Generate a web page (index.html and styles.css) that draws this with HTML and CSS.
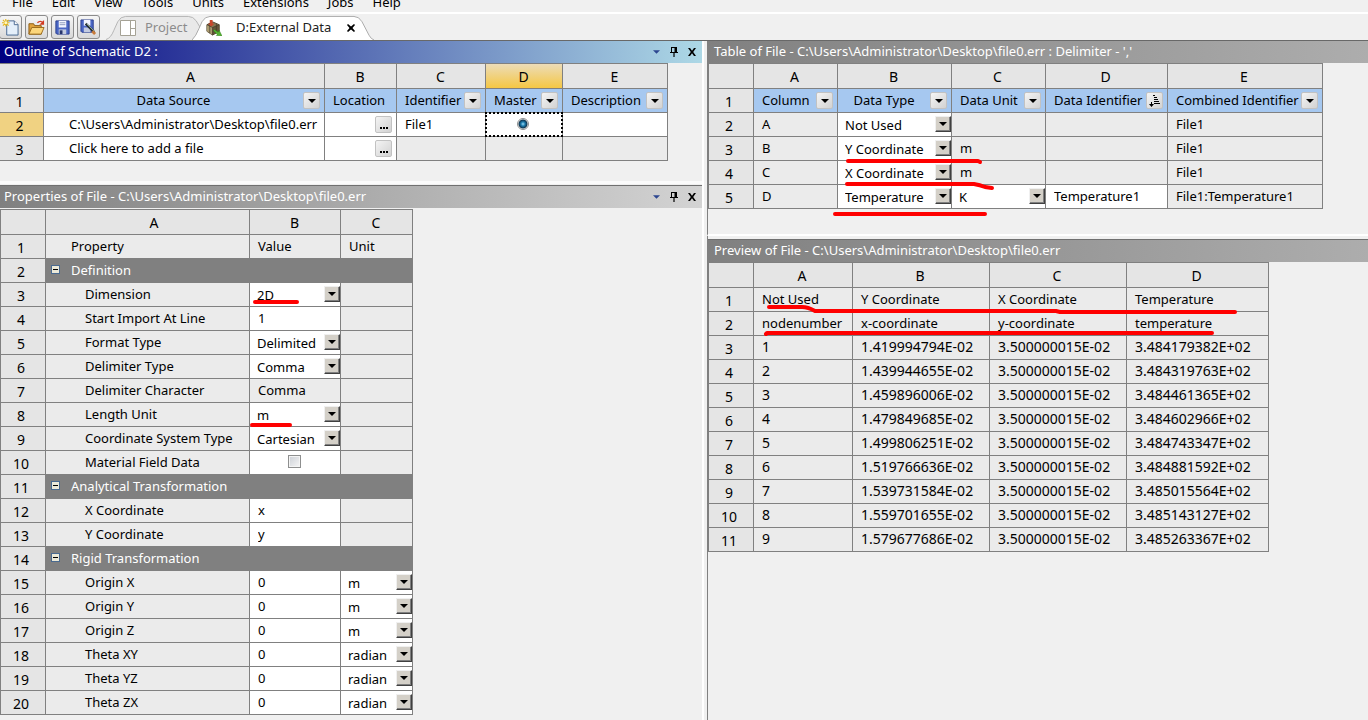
FILE: index.html
```html
<!DOCTYPE html>
<html lang="en">
<head>
<meta charset="utf-8">
<title>External Data</title>
<link rel="stylesheet" href="styles.css">
</head>
<body>
<svg class="defs" aria-hidden="true">
  <symbol id="down" viewBox="0 0 8 4"><path d="M0 0h8L4 4z"/></symbol>
  <symbol id="pin" viewBox="0 0 8 10"><path d="M1 0h6v5h1v1H4.600V10H3.400V6H0V5h1zM2 1v4h2.500V1z" fill-rule="evenodd"/></symbol>
  <symbol id="close" viewBox="0 0 8 8"><path d="M0 0h2l2 2.700L6 0h2L5.200 4 8 8H6L4 5.300 2 8H0l2.800-4z"/></symbol>
  <symbol id="sort" viewBox="0 0 12 12"><path d="M4 0h2v1H4zM5 2h3v1H5zM5 4h4v1H5zM5 6h5v1H5zM5 8h6v1H5zM2 7h1v2h2L2.500 12 0 9h2z"/></symbol>
</svg>

<nav class="menu">
  <button>File</button><button>Edit</button><button>View</button><button>Tools</button><button>Units</button><button>Extensions</button><button>Jobs</button><button>Help</button>
</nav>

<header class="toolbar">
  <div class="tools">
    <button class="tool" aria-label="New"><svg viewBox="0 0 18 18"><path d="M5 2h8l4 4v11H5z" fill="#e4effa" stroke="#45658f"/><path d="M13 2v4h4" fill="#fff" stroke="#45658f"/><path d="M4 0v8M0 4h8M1 1l6 6M7 1L1 7" stroke="#e8b818" stroke-width="1.200"/><circle cx="4" cy="4" r="1.500" fill="#fff8c0"/></svg></button>
    <button class="tool" aria-label="Open"><svg viewBox="0 0 18 18"><path d="M1 16V5h5l1 2h7v9z" fill="#e0a23c" stroke="#8a5a14"/><path d="M1 16l3-7h13l-3 7z" fill="#fbd67c" stroke="#9a6a1c"/><path d="M10 4q3-3 6 0" fill="none" stroke="#d23a22" stroke-width="1.500"/><path d="M17 1v5h-5z" fill="#d23a22"/></svg></button>
    <button class="tool" aria-label="Save"><svg viewBox="0 0 18 18"><path d="M2 2h14v14H3l-1-1z" fill="#4a66c4" stroke="#283c8c"/><path d="M5 2h8v7H5z" fill="#f2f5ff"/><path d="M6 4h6M6 6h6" stroke="#8a98bc"/><path d="M5 11h8v5H5z" fill="#c3cbe0"/><path d="M6 12h3v4H6z" fill="#26346c"/></svg></button>
    <button class="tool" aria-label="Save as"><svg viewBox="0 0 18 18"><path d="M1 1h13v13H2l-1-1z" fill="#4a66c4" stroke="#283c8c"/><path d="M4 1h7v6H4z" fill="#f2f5ff"/><path d="M4 9h7v5H4z" fill="#c3cbe0"/><path d="M6 5l9 9" stroke="#202830" stroke-width="2.600"/><path d="M7 5l8 8" stroke="#9fc0a4"/><path d="M13 13l3 3" stroke="#c87a3a" stroke-width="3"/></svg></button>
  </div>
  <div class="tabs">
    <button class="tab project">
      <svg class="shape" viewBox="0 0 98 26" preserveAspectRatio="none"><path d="M0 25.500Q5 24 8 16L12 7Q15 1.500 20 1.500H84Q89 1.500 92 6L98 16V26" fill="#e9e9e9" stroke="#b4b4b4"/></svg>
      <svg class="tabicon" viewBox="0 0 16 16"><path d="M.5.500h15v15H.500zM10.500.500v15M10.500 8.500h5" fill="#fff" stroke="#a5a295"/></svg>
      <span>Project</span>
    </button>
    <button class="tab active">
      <svg class="shape" viewBox="0 0 182 26" preserveAspectRatio="none"><path d="M0 26Q4 22 7 14L10 7Q13 1.500 18 1.500H162Q167 1.500 170 7L177 21Q179 25 182 26" fill="#fff" stroke="#aaa"/></svg>
      <svg class="tabicon" viewBox="0 0 17 17"><path d="M1 5l6-3 7 3v7l-7 4-6-4z" fill="#867652" stroke="#4c402a"/><path d="M1 5l6 3v8l-6-4z" fill="#a99a70"/><path d="M7 8l7-3v7l-7 4z" fill="#625438"/><path d="M1 5l6 3 7-3M7 8v8M4 4v10M11 4v9" fill="none" stroke="#3f3524" stroke-width=".7"/><path d="M4 0h3v4h2L5.500 7 2 4h2z" fill="#c8462c"/><path d="M9 10l4 3 1-2 3 6-6-.5 1-1-4-4z" fill="#54b432" stroke="#2e7a18" stroke-width=".5"/></svg>
      <span>D:External Data</span>
      <svg class="tabclose" viewBox="0 0 8 8"><path d="M1 0l3 2.500L7 0l1 1-2.500 3L8 7 7 8 4 5.500 1 8 0 7l2.500-3L0 1z"/></svg>
    </button>
  </div>
</header>

<main class="work">
  <div class="pane left">
    <section class="panel outline">
      <div class="title on"><h2>Outline of Schematic D2 :</h2><button class="menuicon" aria-label="Options"><svg><use href="#down"/></svg></button><button class="pinicon" aria-label="Pin"><svg><use href="#pin"/></svg></button><button class="closeicon" aria-label="Close"><svg><use href="#close"/></svg></button></div>
      <table class="grid t-outline">
        <colgroup><col class="w44"><col class="w281"><col class="w72"><col class="w89"><col class="w77"><col class="w105"></colgroup>
        <tr class="letters"><th></th><th class="first">A</th><th>B</th><th>C</th><th class="hot">D</th><th>E</th></tr>
        <tr class="filters"><th>1</th>
          <td><div class="f mid"><span>Data Source</span><button class="drop" aria-label="Filter"><svg><use href="#down"/></svg></button></div></td>
          <td><div class="f"><span>Location</span></div></td>
          <td><div class="f"><span>Identifier</span><button class="drop" aria-label="Filter"><svg><use href="#down"/></svg></button></div></td>
          <td><div class="f"><span>Master</span><button class="drop" aria-label="Filter"><svg><use href="#down"/></svg></button></div></td>
          <td><div class="f"><span>Description</span><button class="drop" aria-label="Filter"><svg><use href="#down"/></svg></button></div></td></tr>
        <tr><th class="picked">2</th><td class="w in1">C:\Users\Administrator\Desktop\file0.err</td><td class="w"><div class="f end"><button class="drop dots" aria-label="Browse"><svg viewBox="0 0 8 2"><path d="M0 0h2v2H0zM3 0h2v2H3zM6 0h2v2H6z"/></svg></button></div></td><td class="w">File1</td><td class="w focus"><input type="radio" name="master" aria-label="Master" checked></td><td class="w"></td></tr>
        <tr><th>3</th><td class="w in1">Click here to add a file</td><td class="w"><div class="f end"><button class="drop dots" aria-label="Browse"><svg viewBox="0 0 8 2"><path d="M0 0h2v2H0zM3 0h2v2H3zM6 0h2v2H6z"/></svg></button></div></td><td></td><td></td><td></td></tr>
      </table>
    </section>

    <section class="panel props">
      <div class="title wide"><h2>Properties of File - C:\Users\Administrator\Desktop\file0.err</h2><button class="menuicon" aria-label="Options"><svg><use href="#down"/></svg></button><button class="pinicon" aria-label="Pin"><svg><use href="#pin"/></svg></button><button class="closeicon" aria-label="Close"><svg><use href="#close"/></svg></button></div>
      <div class="marked">
      <table class="grid edged t-props">
        <colgroup><col class="w46"><col class="w204"><col class="w91"><col class="w72"></colgroup>
        <tr class="letters"><th></th><th class="first">A</th><th>B</th><th>C</th></tr>
        <tr><th>1</th><td class="in1">Property</td><td>Value</td><td>Unit</td></tr>
        <tr class="sec"><th>2</th><td colspan="3"><div class="s"><button aria-label="Collapse"></button>Definition</div></td></tr>
        <tr><th>3</th><td class="in2">Dimension</td><td class="w"><div class="pick"><select aria-label="Dimension"><option>2D</option></select><i><svg><use href="#down"/></svg></i></div></td><td></td></tr>
        <tr><th>4</th><td class="in2">Start Import At Line</td><td class="w"><input type="text" aria-label="Start Import At Line" value="1"></td><td></td></tr>
        <tr><th>5</th><td class="in2">Format Type</td><td class="w"><div class="pick"><select aria-label="Format Type"><option>Delimited</option></select><i><svg><use href="#down"/></svg></i></div></td><td></td></tr>
        <tr><th>6</th><td class="in2">Delimiter Type</td><td class="w"><div class="pick"><select aria-label="Delimiter Type"><option>Comma</option></select><i><svg><use href="#down"/></svg></i></div></td><td></td></tr>
        <tr><th>7</th><td class="in2">Delimiter Character</td><td>Comma</td><td></td></tr>
        <tr><th>8</th><td class="in2">Length Unit</td><td class="w"><div class="pick"><select aria-label="Length Unit"><option>m</option></select><i><svg><use href="#down"/></svg></i></div></td><td></td></tr>
        <tr><th>9</th><td class="in2">Coordinate System Type</td><td class="w"><div class="pick"><select aria-label="Coordinate System Type"><option>Cartesian</option></select><i><svg><use href="#down"/></svg></i></div></td><td></td></tr>
        <tr><th>10</th><td class="in2">Material Field Data</td><td class="w center"><input type="checkbox" aria-label="Material Field Data"></td><td></td></tr>
        <tr class="sec"><th>11</th><td colspan="3"><div class="s"><button aria-label="Collapse"></button>Analytical Transformation</div></td></tr>
        <tr><th>12</th><td class="in2">X Coordinate</td><td class="w"><input type="text" aria-label="X Coordinate" value="x"></td><td></td></tr>
        <tr><th>13</th><td class="in2">Y Coordinate</td><td class="w"><input type="text" aria-label="Y Coordinate" value="y"></td><td></td></tr>
        <tr class="sec"><th>14</th><td colspan="3"><div class="s"><button aria-label="Collapse"></button>Rigid Transformation</div></td></tr>
        <tr><th>15</th><td class="in2">Origin X</td><td class="w"><input type="text" aria-label="Origin X" value="0"></td><td class="w"><div class="pick"><select aria-label="Origin X unit"><option>m</option></select><i><svg><use href="#down"/></svg></i></div></td></tr>
        <tr><th>16</th><td class="in2">Origin Y</td><td class="w"><input type="text" aria-label="Origin Y" value="0"></td><td class="w"><div class="pick"><select aria-label="Origin Y unit"><option>m</option></select><i><svg><use href="#down"/></svg></i></div></td></tr>
        <tr><th>17</th><td class="in2">Origin Z</td><td class="w"><input type="text" aria-label="Origin Z" value="0"></td><td class="w"><div class="pick"><select aria-label="Origin Z unit"><option>m</option></select><i><svg><use href="#down"/></svg></i></div></td></tr>
        <tr><th>18</th><td class="in2">Theta XY</td><td class="w"><input type="text" aria-label="Theta XY" value="0"></td><td class="w"><div class="pick"><select aria-label="Theta XY unit"><option>radian</option></select><i><svg><use href="#down"/></svg></i></div></td></tr>
        <tr><th>19</th><td class="in2">Theta YZ</td><td class="w"><input type="text" aria-label="Theta YZ" value="0"></td><td class="w"><div class="pick"><select aria-label="Theta YZ unit"><option>radian</option></select><i><svg><use href="#down"/></svg></i></div></td></tr>
        <tr><th>20</th><td class="in2">Theta ZX</td><td class="w"><input type="text" aria-label="Theta ZX" value="0"></td><td class="w"><div class="pick"><select aria-label="Theta ZX unit"><option>radian</option></select><i><svg><use href="#down"/></svg></i></div></td></tr>
      </table>
      <svg class="ink" aria-hidden="true"><path d="M255 94H297M252 217H290"/></svg>
      </div>
    </section>
  </div>

  <div class="pane right">
    <section class="panel filetable">
      <div class="title"><h2>Table of File - C:\Users\Administrator\Desktop\file0.err : Delimiter - ','</h2></div>
      <div class="marked">
      <table class="grid edged t-file">
        <colgroup><col class="w46"><col class="w84"><col class="w114"><col class="w94"><col class="w122"><col class="w155"></colgroup>
        <tr class="letters"><th></th><th>A</th><th>B</th><th>C</th><th>D</th><th>E</th></tr>
        <tr class="filters"><th>1</th>
          <td><div class="f"><span>Column</span><button class="drop" aria-label="Filter"><svg><use href="#down"/></svg></button></div></td>
          <td><div class="f mid"><span>Data Type</span><button class="drop" aria-label="Filter"><svg><use href="#down"/></svg></button></div></td>
          <td><div class="f"><span>Data Unit</span><button class="drop" aria-label="Filter"><svg><use href="#down"/></svg></button></div></td>
          <td><div class="f"><span>Data Identifier</span><button class="drop sorted" aria-label="Sort"><svg><use href="#sort"/></svg></button></div></td>
          <td><div class="f"><span>Combined Identifier</span><button class="drop" aria-label="Filter"><svg><use href="#down"/></svg></button></div></td></tr>
        <tr><th>2</th><td>A</td><td class="w"><div class="pick"><select aria-label="Data type A"><option>Not Used</option></select><i><svg><use href="#down"/></svg></i></div></td><td></td><td></td><td>File1</td></tr>
        <tr><th>3</th><td>B</td><td class="w"><div class="pick"><select aria-label="Data type B"><option>Y Coordinate</option></select><i><svg><use href="#down"/></svg></i></div></td><td>m</td><td></td><td>File1</td></tr>
        <tr><th>4</th><td>C</td><td class="w"><div class="pick"><select aria-label="Data type C"><option>X Coordinate</option></select><i><svg><use href="#down"/></svg></i></div></td><td>m</td><td></td><td>File1</td></tr>
        <tr><th>5</th><td>D</td><td class="w"><div class="pick"><select aria-label="Data type D"><option>Temperature</option></select><i><svg><use href="#down"/></svg></i></div></td><td class="w"><div class="pick"><select aria-label="Unit D"><option>K</option></select><i><svg><use href="#down"/></svg></i></div></td><td class="w"><input type="text" aria-label="Data Identifier" value="Temperature1"></td><td>File1:Temperature1</td></tr>
      </table>
      <svg class="ink" aria-hidden="true"><path d="M140 98H270L272 99M139 121H266Q272 122 277 124L284 125M127 151H277"/></svg>
      </div>
    </section>

    <section class="panel preview">
      <div class="title"><h2>Preview of File - C:\Users\Administrator\Desktop\file0.err</h2></div>
      <div class="marked">
      <table class="grid edged t-preview">
        <colgroup><col class="w46"><col class="w99"><col class="w137"><col class="w137"><col class="w142"></colgroup>
        <tr class="letters"><th></th><th>A</th><th>B</th><th>C</th><th>D</th></tr>
        <tr><th>1</th><td>Not Used</td><td>Y Coordinate</td><td>X Coordinate</td><td>Temperature</td></tr>
        <tr><th>2</th><td>nodenumber</td><td>x-coordinate</td><td>y-coordinate</td><td>temperature</td></tr>
        <tr class="num"><th>3</th><td>1</td><td>1.419994794E-02</td><td>3.500000015E-02</td><td>3.484179382E+02</td></tr>
        <tr class="num"><th>4</th><td>2</td><td>1.439944655E-02</td><td>3.500000015E-02</td><td>3.484319763E+02</td></tr>
        <tr class="num"><th>5</th><td>3</td><td>1.459896006E-02</td><td>3.500000015E-02</td><td>3.484461365E+02</td></tr>
        <tr class="num"><th>6</th><td>4</td><td>1.479849685E-02</td><td>3.500000015E-02</td><td>3.484602966E+02</td></tr>
        <tr class="num"><th>7</th><td>5</td><td>1.499806251E-02</td><td>3.500000015E-02</td><td>3.484743347E+02</td></tr>
        <tr class="num"><th>8</th><td>6</td><td>1.519766636E-02</td><td>3.500000015E-02</td><td>3.484881592E+02</td></tr>
        <tr class="num"><th>9</th><td>7</td><td>1.539731584E-02</td><td>3.500000015E-02</td><td>3.485015564E+02</td></tr>
        <tr class="num"><th>10</th><td>8</td><td>1.559701655E-02</td><td>3.500000015E-02</td><td>3.485143127E+02</td></tr>
        <tr class="num"><th>11</th><td>9</td><td>1.579677686E-02</td><td>3.500000015E-02</td><td>3.485263367E+02</td></tr>
      </table>
      <svg class="ink" aria-hidden="true"><path d="M61 45H94Q100 45 107 49H348L352 50H527M58 72L59 71H504"/></svg>
      </div>
    </section>
  </div>
</main>
</body>
</html>
```
FILE: styles.css
```css
* { box-sizing: border-box; }
html { height: 100%; }
body {
  margin: 0;
  min-height: 100%;
  display: flex;
  flex-direction: column;
  background: #f0f0f0;
  color: #000;
  font: 13px/18px "Noto Sans", sans-serif;
}
button, input, select {
  font: inherit;
  color: inherit;
  margin: 0;
  padding: 0;
  border: 0;
  background: none;
}
svg { display: block; }
.defs { position: absolute; width: 0; height: 0; }

/* Menu and toolbar */
.menu {
  display: flex;
  align-items: flex-end;
  gap: 19px;
  height: 12px;
  padding: 0 0 1px 12px;
  overflow: hidden;
}
.menu button { height: 18px; flex: none; }
.toolbar {
  display: flex;
  height: 29px;
  padding-top: 1px;
  border-top: 2px solid #fff;
  border-bottom: 1px solid #686868;
}
.tools { display: flex; gap: 3px; margin-left: -1px; }
.tool {
  width: 23px;
  height: 24px;
  display: grid;
  place-items: center;
  border: 1px solid #8c8c8c;
  border-radius: 3px;
  background: linear-gradient(#f6f6f6, #d9d9d9);
}
.tool svg { width: 17px; height: 17px; }
.tabs { display: flex; margin-left: 6px; }
.tab {
  position: relative;
  display: flex;
  align-items: center;
  height: 25px;
  color: #222;
}
.tab > * { position: relative; }
.tab span { padding-bottom: 1px; }
.tab .shape { position: absolute; inset: 0; width: 100%; height: 100%; }
.project { width: 96px; padding-left: 14px; gap: 9px; color: #8c8c8c; }
.active { width: 182px; margin-left: -10px; padding-left: 14px; gap: 14px; }
.tabicon { width: 16px; height: 16px; }
.tabclose { width: 8px; height: 8px; margin-left: 2px; }

/* Panes */
.work { flex: 1; display: grid; grid-template-columns: 702fr 666fr; }
.pane { display: flex; flex-direction: column; min-width: 0; }
.right { border-left: 2px solid #fff; padding-left: 3px; }
.right .panel { border-left: 1px solid #808080; }
.outline { padding-bottom: 20px; border-bottom: 3px solid #fbfbfb; }
.filetable { padding-bottom: 25px; border-bottom: 2px solid #fff; }
.props, .preview { flex: 1; }
.props .title { border-top: 1px solid #707070; height: 23px; }
.props { padding-top: 1px; }
.props .marked { padding-top: 1px; }
.preview { padding-top: 3px; }
.preview .title { border-top: 1px solid #707070; height: 23px; }

.title {
  display: flex;
  align-items: center;
  height: 22px;
  padding: 0 6px 0 4px;
  color: #fff;
  background: linear-gradient(90deg, #808080, #adadad);
}
.right .title { padding-left: 6px; }
.title.wide { background: linear-gradient(90deg, #808080, #d3d3d3); }
.title.on { background: linear-gradient(90deg, #000080, #add8e6); }
.title h2 { flex: 1; margin: 0; padding-bottom: 2px; font-size: 13px; font-weight: normal; white-space: nowrap; }
.title button { color: #000; margin-left: 10px; }
.title svg { fill: currentColor; }
.title .menuicon { color: #2d4690; }
.menuicon svg { width: 7px; height: 4px; }
.pinicon svg { width: 8px; height: 10px; }
.closeicon svg { width: 8px; height: 8px; }

/* Spreadsheet grids */
.grid {
  table-layout: fixed;
  border-spacing: 0;
  border-top: 1px solid #808080;
}
.edged { border-left: 1px solid #808080; }
.t-outline { width: 668px; }
.t-props { width: 413px; }
.t-file { width: 615px; }
.t-preview { width: 561px; }
.w44 { width: 44px; } .w46 { width: 45px; } .w72 { width: 72px; }
.w77 { width: 77px; } .w84 { width: 84px; } .w89 { width: 89px; }
.w91 { width: 91px; } .w94 { width: 94px; } .w99 { width: 99px; }
.w105 { width: 105px; } .w114 { width: 114px; } .w122 { width: 122px; }
.w137 { width: 137px; } .w142 { width: 142px; } .w155 { width: 155px; }
.w204 { width: 204px; } .w281 { width: 281px; }
.grid th, .grid td {
  height: 24px;
  padding: 0 0 2px 8px;
  border-right: 1px solid #808080;
  border-bottom: 1px solid #808080;
  background: #ebebeb;
  text-align: left;
  white-space: nowrap;
}
.grid th {
  padding: 2px 4px 0 0;
  background: #e5e5e5;
  font-weight: normal;
  font-size: 14px;
  text-align: center;
}
.grid .letters th { height: 25px; padding: 2px 1px 0 0; }
.grid .letters .first { padding-left: 14px; }
.t-file .letters th, .t-preview .letters th { padding-right: 2px; }
.grid .w { background: #fff; }
.grid .in1 { padding-left: 25px; }
.grid .in2 { padding-left: 39px; }
.grid .hot { background: linear-gradient(#ecdcb8, #f5c744); }
.grid .picked { background: #f0d282; }
.filters td { background: #a6c8f0 !important; }
.grid .center { text-align: center; padding: 0 2px 2px 0; }
.num { font-size: 14px; }
.sec td { background: #808080 !important; color: #fff; }
.s { display: flex; align-items: center; }
.s button {
  width: 9px;
  height: 9px;
  margin: 0 11px 0 -3px;
  border: 1px solid #4a6a90;
  background: linear-gradient(#000, #000) center / 5px 1px no-repeat #ece9d8;
}
.f {
  display: flex;
  align-items: center;
  height: 23px;
  margin-bottom: -2px;
  padding-right: 4px;
}
.f span { flex: 1; padding-bottom: 1px; }
.mid { margin-left: -8px; }
.mid span { text-align: center; }
.end { justify-content: flex-end; }
.drop {
  width: 17px;
  height: 17px;
  display: grid;
  place-items: center;
  border: 1px solid #c2c2c2;
  border-radius: 2px;
  background: linear-gradient(135deg, #f4f4f4, #d2d2d2);
}
.drop svg { width: 8px; height: 4px; }
.drop.sorted svg { width: 12px; height: 12px; }
.drop.dots { padding-top: 6px; }
.drop.dots svg { height: 2px; }

.grid input[type="text"], .grid select {
  display: block;
  width: 100%;
  height: 23px;
  appearance: none;
  outline: 0;
}
.grid input[type="text"] { margin-bottom: -2px; padding-bottom: 2px; }
.pick { position: relative; margin: 0 0 -2px -1px; }
.pick i {
  position: absolute;
  right: 0;
  top: 3px;
  width: 16px;
  height: 16px;
  display: grid;
  place-items: center;
  background: #d4d0c8;
  border: 1px solid;
  border-color: #f0f0f0 #404040 #404040 #f0f0f0;
  box-shadow: inset -1px -1px #808080;
  pointer-events: none;
}
.pick i svg { width: 8px; height: 4px; }
.grid input[type="checkbox"] {
  display: block;
  width: 13px;
  height: 13px;
  margin: 0 auto;
  appearance: none;
  border: 1px solid #8e8f8f;
  box-shadow: inset 0 0 0 1px #f4f4f4;
  background: linear-gradient(135deg, #cbcfd5, #f6f6f6);
}
.grid .focus { position: relative; padding: 0 2px 2px 0; }
.focus::after {
  content: "";
  position: absolute;
  inset: -1px;
  border: 2px dotted #000;
  pointer-events: none;
}
.grid input[type="radio"] {
  display: block;
  width: 12px;
  height: 12px;
  margin: 0 auto;
  appearance: none;
  border: 1px solid #8e8f8f;
  border-radius: 50%;
  background: radial-gradient(circle at 50% 50%, #9fdcf5 0, #1c7db0 2px, #10354f 4px, #f4f4f4 5px);
}

/* Hand-drawn underlines */
.marked { position: relative; }
.ink {
  position: absolute;
  inset: 0;
  width: 100%;
  height: 100%;
  overflow: visible;
  pointer-events: none;
  fill: none;
  stroke: #f00;
  stroke-width: 4px;
  stroke-linecap: round;
  stroke-linejoin: round;
}
```
